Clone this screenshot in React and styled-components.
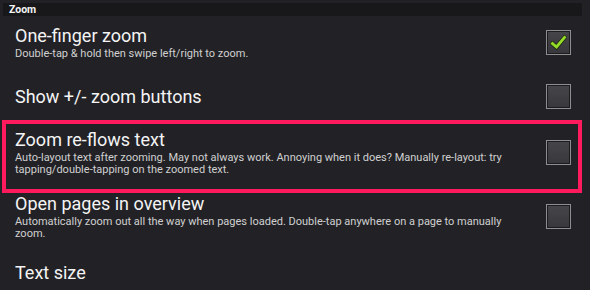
import styled, { createGlobalStyle } from "styled-components";

const GlobalStyle = createGlobalStyle`
html, body {
    margin: 0;
    padding: 0;
    background: #222226;
}
body {
    font-family: Roboto, "Noto Sans", sans-serif;
    color: #f2f2f2;
    width: 590px;
    height: 290px;
    overflow: hidden;
}
`;

const Screen = styled.div`
width: 590px;
height: 290px;
padding-top: 3px;
box-sizing: border-box;
background: #222226;
display: flex;
flex-direction: column;
`;

const SectionHeader = styled.div`
margin: 0 8px 0 3px;
height: 19px;
background: #18181a;
display: flex;
align-items: center;
padding-left: 6px;
font-size: 10.5px;
font-weight: 700;
color: #f4f4f4;
`;

const Row = styled.div`
position: relative;
display: flex;
align-items: center;
padding: ${props => props.pt}px 19px ${props => props.pb}px 15px;
${props => props.highlighted ? `
&::after {
    content: "";
    position: absolute;
    left: 2px;
    right: 8px;
    top: 0;
    bottom: 0;
    border: 4px solid #ff1a5e;
    pointer-events: none;
}
` : ""}
`;

const TextBlock = styled.div`
flex: 1;
min-width: 0;
padding-right: 18px;
`;

const Title = styled.div`
font-size: 18px;
line-height: 22px;
color: #f4f4f4;
`;

const Summary = styled.div`
margin-top: 1px;
font-size: 11px;
line-height: 12px;
color: #d0d0d0;
`;

const CheckBox = styled.div`
width: 25px;
height: 25px;
box-sizing: border-box;
border: 1px solid #8e8e90;
box-shadow: inset 0 0 0 1px #1c1c1e;
background: linear-gradient(#46464a, #38383c);
display: flex;
align-items: center;
justify-content: center;
flex-shrink: 0;
`;

function Tick() {
    return (
        <svg width="17" height="17" viewBox="0 0 17 17">
            <path d="M2.5 9.5 L6.5 13 L14.5 3.5" fill="none" stroke="#1f2a10" strokeWidth="4.4" strokeLinecap="square" />
            <path d="M2.5 9.5 L6.5 13 L14.5 3.5" fill="none" stroke="#94dc2a" strokeWidth="2.8" strokeLinecap="square" />
        </svg>
    );
}

const prefs = [
    { title: "One-finger zoom", summary: "Double-tap & hold then swipe left/right to zoom.", checked: true, pt: 9, pb: 12 },
    { title: "Show +/- zoom buttons", pt: 12, pb: 11 },
    { title: "Zoom re-flows text", summary: "Auto-layout text after zooming. May not always work. Annoying when it does? Manually re-layout: try tapping/double-tapping on the zoomed text.", pt: 9, pb: 17, highlighted: true },
    { title: "Open pages in overview", summary: "Automatically zoom out all the way when pages loaded. Double-tap anywhere on a page to manually zoom.", pt: 0, pb: 11 },
    { title: "Text size", pt: 11, pb: 10, noBox: true },
];

export default function App() {
    return (
        <>
            <GlobalStyle />
            <Screen>
                <SectionHeader>Zoom</SectionHeader>
                {prefs.map(p => (
                    <Row key={p.title} pt={p.pt} pb={p.pb} highlighted={p.highlighted}>
                        <TextBlock>
                            <Title>{p.title}</Title>
                            {p.summary && <Summary>{p.summary}</Summary>}
                        </TextBlock>
                        {!p.noBox && <CheckBox>{p.checked && <Tick />}</CheckBox>}
                    </Row>
                ))}
            </Screen>
        </>
    );
}
